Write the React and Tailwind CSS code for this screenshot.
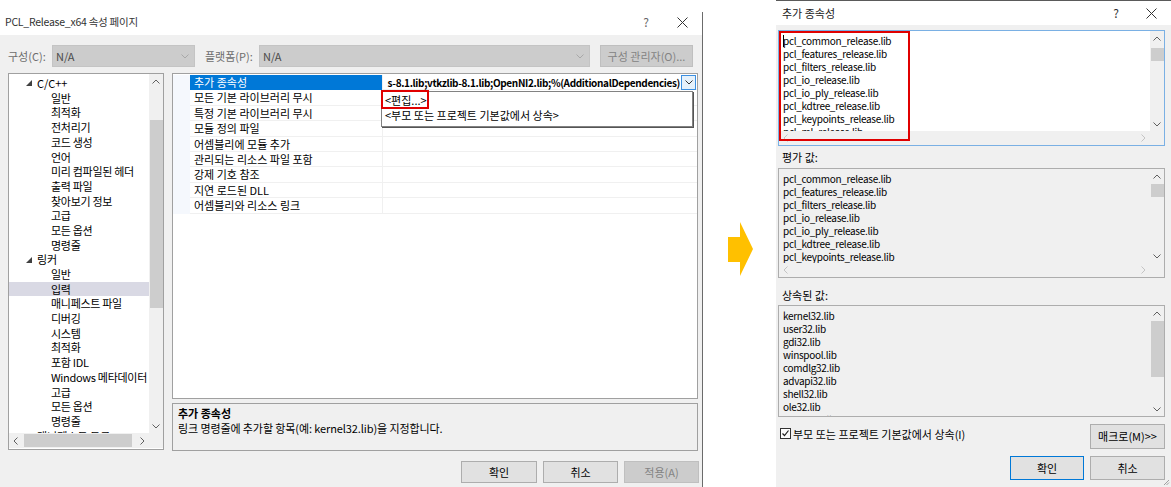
import React from "react";

const Up = ({ c = "#606060" }) => (
  <svg width="8" height="5" viewBox="0 0 8 5"><polyline points="0.5,4.5 4,1 7.5,4.5" fill="none" stroke={c} strokeWidth="1" /></svg>
);
const Down = ({ c = "#606060" }) => (
  <svg width="8" height="5" viewBox="0 0 8 5"><polyline points="0.5,0.5 4,4 7.5,0.5" fill="none" stroke={c} strokeWidth="1" /></svg>
);
const Left = ({ c = "#606060" }) => (
  <svg width="5" height="8" viewBox="0 0 5 8"><polyline points="4.5,0.5 1,4 4.5,7.5" fill="none" stroke={c} strokeWidth="1" /></svg>
);
const Right = ({ c = "#606060" }) => (
  <svg width="5" height="8" viewBox="0 0 5 8"><polyline points="0.5,0.5 4,4 0.5,7.5" fill="none" stroke={c} strokeWidth="1" /></svg>
);
const Tri = () => (
  <svg width="6" height="6" viewBox="0 0 6 6"><polygon points="6,0 6,6 0,6" fill="#404040" /></svg>
);
const Close = () => (
  <svg width="11" height="11" viewBox="0 0 11 11"><path d="M0.5 0.5 L10.5 10.5 M10.5 0.5 L0.5 10.5" stroke="#333" strokeWidth="1" /></svg>
);

const treeItems = [
  ["C/C++", 0], ["일반", 1], ["최적화", 1], ["전처리기", 1], ["코드 생성", 1], ["언어", 1],
  ["미리 컴파일된 헤더", 1], ["출력 파일", 1], ["찾아보기 정보", 1], ["고급", 1], ["모든 옵션", 1],
  ["명령줄", 1], ["링커", 0], ["일반", 1], ["입력", 1, true], ["매니페스트 파일", 1], ["디버깅", 1],
  ["시스템", 1], ["최적화", 1], ["포함 IDL", 1], ["Windows 메타데이터", 1], ["고급", 1],
  ["모든 옵션", 1], ["명령줄", 1], ["매니페스트 도구", 0],
];

const props = [
  "추가 종속성", "모든 기본 라이브러리 무시", "특정 기본 라이브러리 무시", "모듈 정의 파일",
  "어셈블리에 모듈 추가", "관리되는 리소스 파일 포함", "강제 기호 참조", "지연 로드된 DLL",
  "어셈블리와 리소스 링크",
];

const pclLibs = [
  "pcl_common_release.lib", "pcl_features_release.lib", "pcl_filters_release.lib", "pcl_io_release.lib",
  "pcl_io_ply_release.lib", "pcl_kdtree_release.lib", "pcl_keypoints_release.lib", "pcl_ml_release.lib",
];
const inherited = [
  "kernel32.lib", "user32.lib", "gdi32.lib", "winspool.lib", "comdlg32.lib", "advapi32.lib",
  "shell32.lib", "ole32.lib", "oleaut32.lib",
];

function VScroll({ h, thumbTop, thumbH }) {
  return (
    <div className="flex flex-col w-[14px] bg-[#f0f0f0] shrink-0" style={{ height: h }}>
      <div className="h-[14px] flex items-center justify-center shrink-0"><Up /></div>
      <div className="relative flex-1">
        <div className="absolute left-[1px] right-0 bg-[#cdcdcd]" style={{ top: thumbTop, height: thumbH }} />
      </div>
      <div className="h-[14px] flex items-center justify-center shrink-0"><Down /></div>
    </div>
  );
}

function HScroll({ light }) {
  const c = light ? "#c4c4c4" : "#606060";
  return (
    <div className="h-[14px] flex items-center justify-between bg-[#f0f0f0] px-[4px]">
      <Left c={c} />
      <Right c={c} />
    </div>
  );
}

function ListBox({ lines, h, border, bg, thumbTop, thumbH, withH = true }) {
  const listH = withH ? h - 2 - 14 : h - 2;
  return (
    <div className={`border ${border} ${bg} flex flex-col overflow-hidden`} style={{ height: h }}>
      <div className="flex" style={{ height: listH }}>
        <div className="flex-1 min-w-0 overflow-hidden pl-[4px] pt-[3px]">
          {lines.map((l, i) => (
            <div key={i} className="h-[13px] leading-[13px] text-[10px] tracking-[-0.3px] text-black whitespace-nowrap">{l}</div>
          ))}
        </div>
        <VScroll h={listH} thumbTop={thumbTop} thumbH={thumbH} />
      </div>
      {withH && (
        <div className="flex">
          <div className="flex-1"><HScroll light /></div>
          <div className="w-[14px] h-[14px] bg-[#f0f0f0]" />
        </div>
      )}
    </div>
  );
}

function Btn({ children, w, disabled, def, h = 22 }) {
  return (
    <div
      className={`flex items-center justify-center text-[11px] border shrink-0 ${
        disabled ? "bg-[#cccccc] border-[#bfbfbf] text-[#838383]" : def ? "bg-[#e1e1e1] border-[#0078d7] text-black" : "bg-[#e1e1e1] border-[#adadad] text-black"
      }`}
      style={{ width: w, height: h }}
    >
      {children}
    </div>
  );
}

function Combo({ w, label }) {
  return (
    <div className="h-[22px] bg-[#cccccc] border border-[#c4c4c4] flex items-center justify-between pl-[3px] pr-[5px] shrink-0" style={{ width: w }}>
      <span className="text-[11px] text-[#4a4a4a]">{label}</span>
      <Down c="#a8a8a8" />
    </div>
  );
}

function LeftDialog() {
  return (
    <div className="w-[702px] h-[487px] flex flex-col shrink-0">
      <div className="h-[35px] bg-white flex items-start pt-[14px] pl-[5px] pr-[14px] shrink-0">
        <span className="text-[10.5px] tracking-[-0.25px] leading-[16px] text-[#333]">PCL_Release_x64 속성 페이지</span>
        <div className="flex-1" />
        <span className="text-[12px] leading-[16px] text-[#666] mr-[28px]">?</span>
        <div className="mt-[3px]"><Close /></div>
      </div>
      <div className="flex-1 bg-[#f0f0f0] flex flex-col pl-[8px]">
        <div className="flex items-center mt-[10px] h-[22px]">
          <span className="text-[11px] text-[#6d6d6d] w-[44px] shrink-0">구성(C):</span>
          <Combo w={143} label="N/A" />
          <span className="text-[11px] text-[#6d6d6d] ml-[10px] w-[54px] shrink-0">플랫폼(P):</span>
          <Combo w={331} label="N/A" />
          <div className="ml-[10px]"><Btn w={93} disabled>구성 관리자(O)...</Btn></div>
        </div>
        <div className="flex mt-[6px]">
          {/* tree */}
          <div className="w-[156px] h-[377px] border border-[#a0a0a0] bg-white flex flex-col shrink-0">
            <div className="flex h-[359px]">
              <div className="flex-1 min-w-0 overflow-hidden pt-[2px]">
                {treeItems.map(([t, lvl, sel], i) => (
                  <div key={i} className={`h-[14.7px] flex items-center whitespace-nowrap ${sel ? "bg-[#d9d9e4]" : ""}`}>
                    {lvl === 0 ? (
                      <>
                        <span className="ml-[17px] mr-[5px] flex items-center"><Tri /></span>
                        <span className="text-[11px] text-black">{t}</span>
                      </>
                    ) : (
                      <span className="ml-[42px] text-[11px] tracking-[-0.3px] text-black">{t}</span>
                    )}
                  </div>
                ))}
              </div>
              <VScroll h={359} thumbTop={32} thumbH={188} />
            </div>
            <div className="flex">
              <div className="flex-1 h-[15px] bg-[#f0f0f0] flex items-center px-[4px]">
                <Left />
                <div className="ml-[6px] w-[108px] h-[13px] bg-[#cdcdcd]" />
                <div className="flex-1" />
                <Right />
              </div>
              <div className="w-[14px] h-[15px] bg-[#f0f0f0]" />
            </div>
          </div>
          {/* right column */}
          <div className="ml-[8px] w-[526px] flex flex-col shrink-0">
            <div className="h-[326px] border border-[#a0a0a0] bg-white relative">
              <div className="pt-[1px]">
                {props.map((p, i) => (
                  <div key={i} className="h-[15.4px] flex">
                    <div className="w-[17px] bg-[#f5f8fd] shrink-0" />
                    <div className={`w-[192px] shrink-0 flex items-center pl-[4px] text-[11px] whitespace-nowrap border-b ${i === 0 ? "bg-[#0078d7] text-white border-[#0078d7]" : "text-black border-[#f0f0f0]"}`}>{p}</div>
                    <div className="flex-1 min-w-0 border-l border-b border-[#f0f0f0] flex items-center">
                      {i === 0 && (
                        <>
                          <div className="flex-1 min-w-0 overflow-hidden flex justify-end whitespace-nowrap text-[10px] font-bold tracking-[-0.35px] text-black pr-[1px]">
                            s-8.1.lib;vtkzlib-8.1.lib;OpenNI2.lib;%(AdditionalDependencies)
                          </div>
                          <div className="w-[15px] h-[15px] shrink-0 border border-[#3c8fe0] bg-[#e5f1fb] flex items-center justify-center mr-[1px]"><Down c="#333" /></div>
                        </>
                      )}
                    </div>
                  </div>
                ))}
              </div>
              {/* dropdown */}
              <div className="absolute left-[208px] top-[17px] w-[312px] h-[36px] bg-white border border-[#828282] shadow-[1px_1px_0_#555] flex flex-col pl-[3px]">
                <div className="h-[16px] flex items-center text-[11px] text-black">&lt;편집...&gt;</div>
                <div className="h-[14px] flex items-center text-[11px] text-black">&lt;부모 또는 프로젝트 기본값에서 상속&gt;</div>
              </div>
              <div className="absolute left-[208px] top-[16px] w-[48px] h-[19px] border-2 border-[#e00000]" />
            </div>
            <div className="mt-[4px] h-[48px] border border-[#a0a0a0] bg-[#f0f0f0] pl-[5px] pt-[2px]">
              <div className="text-[11px] leading-[15px] font-bold text-black">추가 종속성</div>
              <div className="text-[11px] leading-[15px] tracking-[-0.1px] text-black">링크 명령줄에 추가할 항목(예: kernel32.lib)을 지정합니다.</div>
            </div>
          </div>
        </div>
        <div className="flex mt-[10px] ml-[453px] gap-[6px]">
          <Btn w={76}>확인</Btn>
          <Btn w={75}>취소</Btn>
          <Btn w={75} disabled>적용(A)</Btn>
        </div>
      </div>
    </div>
  );
}

function RightDialog() {
  return (
    <div className="w-[395px] h-[487px] flex flex-col border-t border-[#5a5a5a] shrink-0">
      <div className="h-[24px] bg-white flex items-center pl-[6px] pr-[14px] shrink-0">
        <span className="text-[11px] text-[#222]">추가 종속성</span>
        <div className="flex-1" />
        <span className="text-[12px] text-[#333] mr-[27px]">?</span>
        <Close />
      </div>
      <div className="flex-1 bg-[#f0f0f0] flex flex-col pl-[2px] pr-[6px] relative">
        <div className="mt-[5px] relative">
          <ListBox lines={pclLibs} h={116} border="border-[#7ab0e4]" bg="bg-white" thumbTop={3} thumbH={13} />
          <div className="absolute left-[1px] top-[1px] w-[131px] h-[110px] border-2 border-[#e00000]" />
          <div className="absolute left-[5px] top-[5px] w-[1px] h-[12px] bg-black" />
        </div>
        <div className="h-[22px] flex items-center pl-[4px] text-[11px] text-black">평가 값:</div>
        <ListBox lines={pclLibs} h={110} border="border-[#adadad]" bg="bg-[#f0f0f0]" thumbTop={1} thumbH={13} />
        <div className="h-[27px] pt-[11px] pl-[4px] text-[11px] leading-[13px] text-black">상속된 값:</div>
        <ListBox lines={inherited} h={112} border="border-[#adadad]" bg="bg-[#f0f0f0]" thumbTop={1} thumbH={56} withH={false} />
        <div className="flex mt-[7px] h-[25px]">
          <div className="flex items-start pt-[4px] pl-[2px]">
            <div className="w-[11px] h-[11px] border border-[#333] bg-white flex items-center justify-center">
              <svg width="9" height="9" viewBox="0 0 9 9"><polyline points="1.5,4.5 3.5,6.5 7.5,1.5" fill="none" stroke="#222" strokeWidth="1.2" /></svg>
            </div>
            <span className="ml-[2px] text-[11px] leading-[12px] text-black">부모 또는 프로젝트 기본값에서 상속(I)</span>
          </div>
          <div className="flex-1" />
          <Btn w={75} h={25}>매크로(M)&gt;&gt;</Btn>
        </div>
        <div className="flex mt-[7px] justify-end gap-[6px]">
          <Btn w={74} h={24} def>확인</Btn>
          <Btn w={75} h={24}>취소</Btn>
        </div>
        <svg className="absolute right-[1px] bottom-[1px]" width="7" height="7" viewBox="0 0 7 7">
          <path d="M6 1 L1 6 M6 3.5 L3.5 6" stroke="#a0a0a0" strokeWidth="1" />
        </svg>
      </div>
    </div>
  );
}

export default function App() {
  return (
    <div className="w-[1171px] h-[487px] bg-white flex overflow-hidden font-['Noto_Sans_CJK_KR',sans-serif]">
      <LeftDialog />
      <div className="w-[1px] mt-[12px] bg-[#6b6b6b] shrink-0" />
      <div className="w-[73px] flex items-start shrink-0">
        <svg className="ml-[25px] mt-[222px]" width="26" height="55" viewBox="0 0 26 55">
          <polygon points="0,15 12,15 12,0 25,27 12,54 12,40 0,40" fill="#ffc000" />
        </svg>
      </div>
      <RightDialog />
    </div>
  );
}
